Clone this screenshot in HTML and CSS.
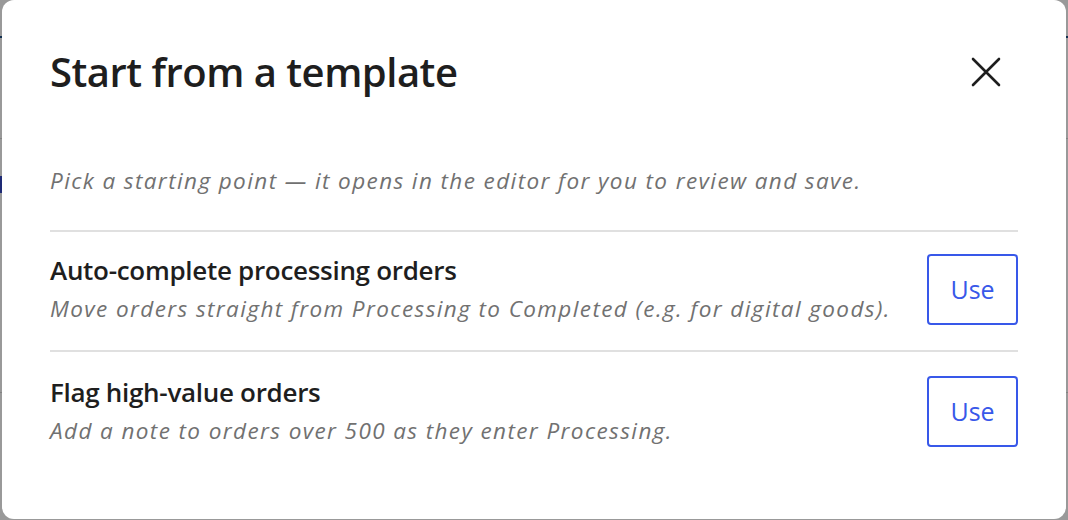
FILE: index.html
```html
<!DOCTYPE html>
<html lang="en">
<head>
<meta charset="utf-8">
<title>Start from a template</title>
<link rel="stylesheet" href="styles.css">
</head>
<body>
<div class="page" aria-hidden="true">
  <div class="page-header"></div>
  <div class="page-line page-line-a"></div>
  <div class="page-link"></div>
  <div class="page-line page-line-b"></div>
</div>
<div class="backdrop"></div>
<div class="modal" role="dialog" aria-labelledby="modal-title">
  <div class="modal-header">
    <h1 id="modal-title" class="modal-title">Start from a template</h1>
    <button class="close-btn" type="button" aria-label="Close">
      <svg width="30" height="30" viewBox="0 0 30 30" aria-hidden="true">
        <path d="M2 2 L28 28 M28 2 L2 28" stroke="#1e1e1e" stroke-width="2.6" stroke-linecap="round" fill="none"/>
      </svg>
    </button>
  </div>
  <p class="modal-intro">Pick a starting point — it opens in the editor for you to review and save.</p>
  <ul class="template-list">
    <li class="template-row">
      <div class="template-text">
        <div class="template-name">Auto-complete processing orders</div>
        <div class="template-desc">Move orders straight from Processing to Completed (e.g. for digital goods).</div>
      </div>
      <button class="use-btn" type="button">Use</button>
    </li>
    <li class="template-row">
      <div class="template-text">
        <div class="template-name">Flag high-value orders</div>
        <div class="template-desc">Add a note to orders over 500 as they enter Processing.</div>
      </div>
      <button class="use-btn" type="button">Use</button>
    </li>
  </ul>
</div>
</body>
</html>
```

FILE: styles.css
```css
* { box-sizing: border-box; }

html, body {
  margin: 0;
  padding: 0;
  height: 100%;
}

body {
  font-family: "Open Sans", "Noto Sans", sans-serif;
  background: #ffffff;
  overflow: hidden;
}

.page {
  height: 100%;
  display: flex;
  flex-direction: column;
}

.page-header {
  height: 38px;
  border-bottom: 2px solid #1d4f86;
}

.page-line {
  height: 1px;
  background: #d9d9d9;
}

.page-line-a { margin-top: 100px; }

.page-link {
  margin-top: 37px;
  width: 3px;
  height: 17px;
  background: #3346c4;
}

.page-line-b { margin-top: 199px; }

.backdrop {
  position: fixed;
  inset: 0;
  background: rgba(0, 0, 0, 0.4);
}

.modal {
  position: fixed;
  top: 0;
  left: 2px;
  width: 1064px;
  height: 519px;
  background: #ffffff;
  border-radius: 12px;
  padding: 48px;
  display: flex;
  flex-direction: column;
}

.modal-header {
  display: flex;
  align-items: center;
  justify-content: space-between;
  height: 48px;
}

.modal-title {
  margin: 0;
  font-size: 40px;
  font-weight: 600;
  line-height: 48px;
  color: #1e1e1e;
  letter-spacing: -0.5px;
}

.close-btn {
  width: 64px;
  height: 48px;
  border: 0;
  background: transparent;
  padding: 0;
  display: flex;
  align-items: center;
  justify-content: center;
  cursor: pointer;
}

.modal-intro {
  margin: 70px 0 0 0;
  padding-bottom: 34px;
  font-size: 22.5px;
  line-height: 30px;
  font-style: italic;
  color: #717171;
  letter-spacing: 1.4px;
  border-bottom: 2px solid #e0e0e0;
}

.template-list {
  list-style: none;
  margin: 0;
  padding: 0;
}

.template-row {
  display: flex;
  align-items: center;
  justify-content: space-between;
  gap: 24px;
  padding: 22px 0 25px;
}

.template-row + .template-row {
  border-top: 2px solid #e0e0e0;
  padding-top: 24px;
}

.template-name {
  font-size: 26px;
  font-weight: 600;
  line-height: 30px;
  color: #1e1e1e;
  letter-spacing: -0.3px;
}

.template-desc {
  margin-top: 9px;
  font-size: 22.5px;
  line-height: 30px;
  font-style: italic;
  color: #717171;
  letter-spacing: 1.4px;
}

.use-btn {
  flex: none;
  width: 91px;
  height: 71px;
  border: 2px solid #3858e9;
  border-radius: 4px;
  background: #ffffff;
  color: #3858e9;
  font-family: inherit;
  font-size: 25px;
  line-height: 1;
  padding: 0;
  cursor: pointer;
}
```
